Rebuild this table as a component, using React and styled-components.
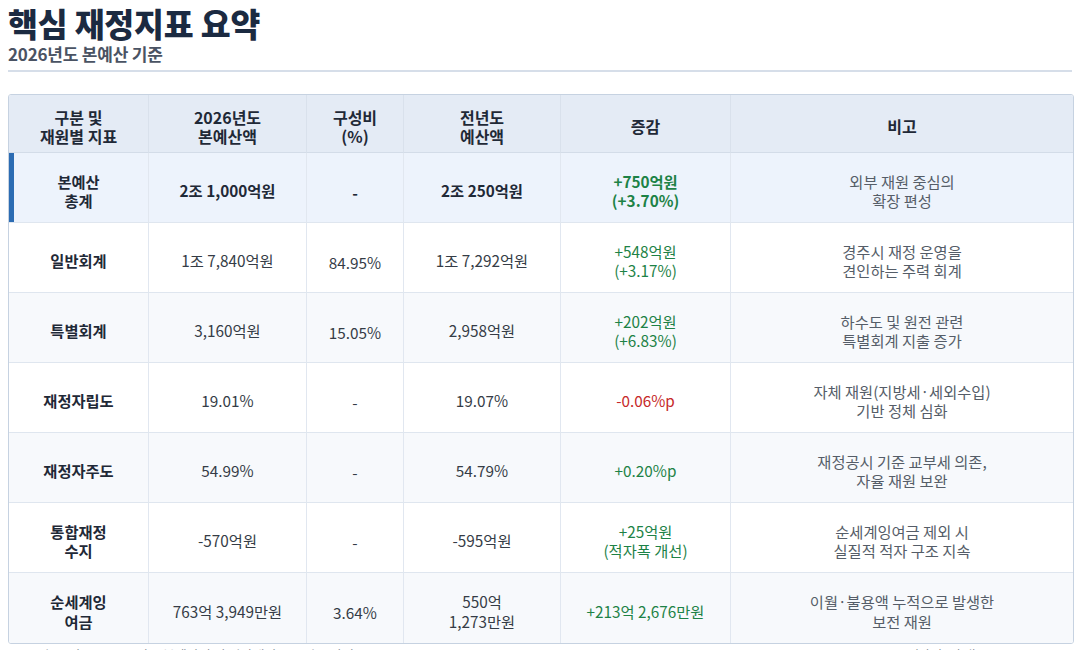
import React from "react";
import styled, { createGlobalStyle } from "styled-components";

const Global = createGlobalStyle`
  html, body { margin: 0; padding: 0; background: #ffffff; }
  body { font-family: "Noto Sans CJK KR", "Noto Sans", sans-serif; color: #333a44; }
  * { box-sizing: border-box; }
`;

const Page = styled.div`
  padding: 3px 8px 0 8px;
`;

const Header = styled.header`
  display: flex;
  flex-direction: column;
  gap: 1px;
  padding-bottom: 7px;
  border-bottom: 2px solid #d6dee9;
`;

const Title = styled.h1`
  margin: 0;
  font-size: 32.5px;
  line-height: 40px;
  font-weight: 900;
  color: #1b2a41;
  letter-spacing: -0.2px;
`;

const Subtitle = styled.div`
  font-size: 17px;
  line-height: 19px;
  font-weight: 600;
  color: #4a5363;
  letter-spacing: -0.2px;
`;

const Table = styled.table`
  margin-top: 22px;
  width: 1064px;
  table-layout: fixed;
  border-collapse: separate;
  border-spacing: 0;
  border: 1.5px solid #c6d2e1;
  border-radius: 3px;
  overflow: hidden;
`;

const Th = styled.th`
  height: 58px;
  background: #e4ebf5;
  font-size: 16px;
  line-height: 19px;
  font-weight: 700;
  color: #1f2937;
  text-align: center;
  vertical-align: middle;
  padding: 6px 6px 0;
  border-right: 1px solid #d9e1ec;
  border-bottom: 1px solid #d3dce8;
  &:last-child { border-right: none; }
`;

const Tr = styled.tr`
  background: ${(p) => (p.$total ? "#edf3fc" : p.$alt ? "#f7f9fc" : "#ffffff")};
  &:last-child td { border-bottom: none; }
`;

const Td = styled.td`
  height: 70px;
  text-align: center;
  vertical-align: middle;
  padding: ${(p) => (p.$low ? "10px 6px 0" : "7px 6px 0")};
  font-size: 15.3px;
  line-height: 19.5px;
  font-weight: ${(p) => (p.$bold ? 700 : 400)};
  color: ${(p) =>
    p.$tone === "up" ? "#1d8246" : p.$tone === "down" ? "#c62828" : p.$tone === "note" ? "#555d68" : p.$bold ? "#1f2937" : "#353c46"};
  border-right: 1px solid #e1e7f0;
  border-bottom: 1px solid #dfe6ef;
  box-shadow: ${(p) => (p.$bar ? "inset 5px 0 0 #2c6cb3" : "none")};
  &:last-child { border-right: none; }
`;

const Footnote = styled.div`
  display: flex;
  justify-content: space-between;
  padding: 0 95px 0 14px;
  margin-top: 2px;
  font-size: 13px;
  line-height: 18px;
  color: #6b7380;
`;

const cols = [140, 158, 97, 157, 170, 342];

const rows = [
  { name: ["본예산", "총계"], cur: ["2조 1,000억원"], ratio: "-", prev: ["2조 250억원"], diff: ["+750억원", "(+3.70%)"], tone: "up", note: ["외부 재원 중심의", "확장 편성"], total: true },
  { name: ["일반회계"], cur: ["1조 7,840억원"], ratio: "84.95%", prev: ["1조 7,292억원"], diff: ["+548억원", "(+3.17%)"], tone: "up", note: ["경주시 재정 운영을", "견인하는 주력 회계"] },
  { name: ["특별회계"], cur: ["3,160억원"], ratio: "15.05%", prev: ["2,958억원"], diff: ["+202억원", "(+6.83%)"], tone: "up", note: ["하수도 및 원전 관련", "특별회계 지출 증가"] },
  { name: ["재정자립도"], cur: ["19.01%"], ratio: "-", prev: ["19.07%"], diff: ["-0.06%p"], tone: "down", note: ["자체 재원(지방세·세외수입)", "기반 정체 심화"] },
  { name: ["재정자주도"], cur: ["54.99%"], ratio: "-", prev: ["54.79%"], diff: ["+0.20%p"], tone: "up", note: ["재정공시 기준 교부세 의존,", "자율 재원 보완"] },
  { name: ["통합재정", "수지"], cur: ["-570억원"], ratio: "-", prev: ["-595억원"], diff: ["+25억원", "(적자폭 개선)"], tone: "up", note: ["순세계잉여금 제외 시", "실질적 적자 구조 지속"] },
  { name: ["순세계잉", "여금"], cur: ["763억 3,949만원"], ratio: "3.64%", prev: ["550억", "1,273만원"], diff: ["+213억 2,676만원"], tone: "up", note: ["이월·불용액 누적으로 발생한", "보전 재원"] },
];

const Lines = ({ items }) =>
  items.map((t, i) => (
    <React.Fragment key={i}>
      {i > 0 && <br />}
      {t}
    </React.Fragment>
  ));

export default function App() {
  return (
    <Page>
      <Global />
      <Header>
        <Title>핵심 재정지표 요약</Title>
        <Subtitle>2026년도 본예산 기준</Subtitle>
      </Header>
      <Table>
        <colgroup>
          {cols.map((w, i) => (
            <col key={i} style={{ width: w }} />
          ))}
        </colgroup>
        <thead>
          <tr>
            <Th>구분 및<br />재원별 지표</Th>
            <Th>2026년도<br />본예산액</Th>
            <Th>구성비<br />(%)</Th>
            <Th>전년도<br />예산액</Th>
            <Th>증감</Th>
            <Th>비고</Th>
          </tr>
        </thead>
        <tbody>
          {rows.map((r, i) => (
            <Tr key={i} $total={r.total} $alt={!r.total && i % 2 === 0}>
              <Td $bold $bar={r.total}><Lines items={r.name} /></Td>
              <Td $bold={r.total}><Lines items={r.cur} /></Td>
              <Td $bold={r.total} $low>{r.ratio}</Td>
              <Td $bold={r.total}><Lines items={r.prev} /></Td>
              <Td $bold={r.total} $tone={r.tone}><Lines items={r.diff} /></Td>
              <Td $tone="note"><Lines items={r.note} /></Td>
            </Tr>
          ))}
        </tbody>
      </Table>
      <Footnote>
        <span>※ 자료: 경주시 2026년도 본예산서 및 지방재정공시 기준 작성</span>
        <span>(단위: 억원)</span>
      </Footnote>
    </Page>
  );
}
